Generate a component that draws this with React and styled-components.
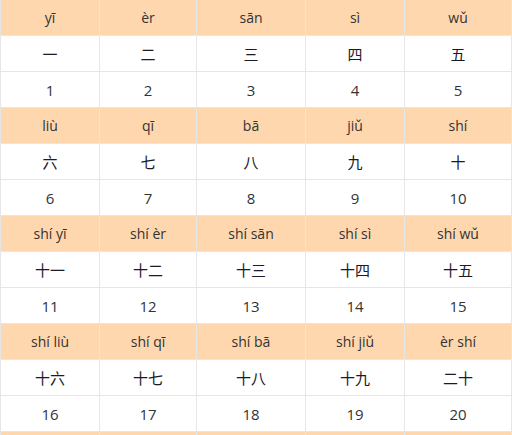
import React from 'react'
import { styled, createGlobalStyle } from 'styled-components'

const groups = [
  [
    ['yī', '一', 1],
    ['èr', '二', 2],
    ['sān', '三', 3],
    ['sì', '四', 4],
    ['wǔ', '五', 5],
  ],
  [
    ['liù', '六', 6],
    ['qī', '七', 7],
    ['bā', '八', 8],
    ['jiǔ', '九', 9],
    ['shí', '十', 10],
  ],
  [
    ['shí yī', '十一', 11],
    ['shí èr', '十二', 12],
    ['shí sān', '十三', 13],
    ['shí sì', '十四', 14],
    ['shí wǔ', '十五', 15],
  ],
  [
    ['shí liù', '十六', 16],
    ['shí qī', '十七', 17],
    ['shí bā', '十八', 18],
    ['shí jiǔ', '十九', 19],
    ['èr shí', '二十', 20],
  ],
]

const App = () => {
  return (
    <>
      <Global />
      <Table>
        {groups.map((group, g) => (
          <React.Fragment key={g}>
            {group.map(([pinyin]) => (
              <Cell key={'p' + pinyin} $kind="head">{pinyin}</Cell>
            ))}
            {group.map(([, hanzi]) => (
              <Cell key={'h' + hanzi} $kind="cjk">{hanzi}</Cell>
            ))}
            {group.map(([, , num]) => (
              <Cell key={'n' + num} $kind="num">{num}</Cell>
            ))}
          </React.Fragment>
        ))}
        {/* next header row, cut off by the bottom of the frame */}
        {[0, 1, 2, 3, 4].map((i) => (
          <Cell key={'t' + i} $kind="head" />
        ))}
      </Table>
    </>
  )
}

const Global = createGlobalStyle`
  body {
    margin: 0;
    background: #fff;
    overflow: hidden;
  }
`

const Table = styled.div`
  display: grid;
  grid-template-columns: 98px 96px 108px 98px 106px;
  grid-auto-rows: 35px;
  column-gap: 1px;
  row-gap: 1px;
  width: 512px;
  box-sizing: border-box;
  padding: 0 1px 1px 1px;
  background: #e6e6e6;
  color: #333;
`

const Cell = styled.div`
  display: flex;
  align-items: center;
  justify-content: center;
  background: ${(p) => (p.$kind === 'head' ? '#ffd7ae' : '#fff')};
  font-family: ${(p) =>
    p.$kind === 'cjk' ? '"Noto Sans CJK SC", sans-serif' : '"Open Sans", "Noto Sans", sans-serif'};
  font-size: ${(p) => (p.$kind === 'head' ? '14px' : '15px')};
  color: ${(p) => (p.$kind === 'cjk' ? '#1a1a2a' : '#333')};
  white-space: nowrap;
`

export default App
